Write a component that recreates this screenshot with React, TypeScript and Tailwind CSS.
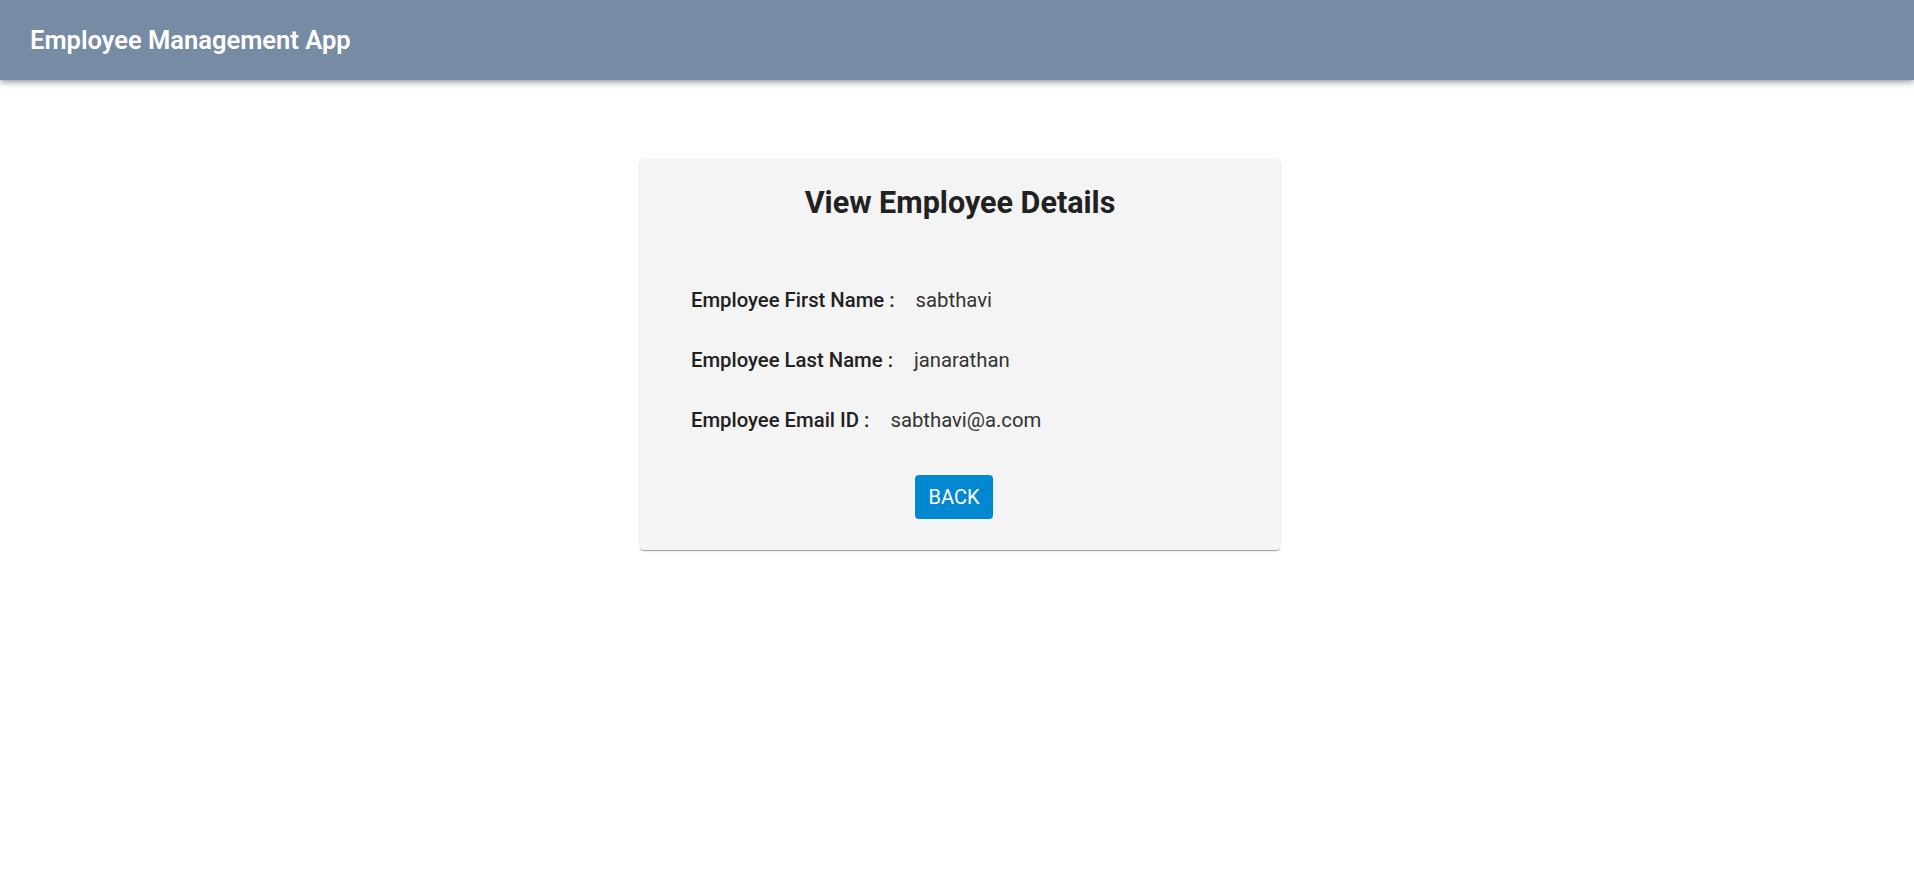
import { useState } from "react";

interface Employee {
  firstName: string;
  lastName: string;
  emailId: string;
}

const employee: Employee = {
  firstName: "sabthavi",
  lastName: "janarathan",
  emailId: "sabthavi@a.com",
};

function Header() {
  return (
    <header className="h-[80px] bg-[#778ba5] flex items-center px-[30px] shadow-[0_2px_4px_-1px_rgba(0,0,0,0.2),0_4px_5px_0_rgba(0,0,0,0.14),0_1px_10px_0_rgba(0,0,0,0.12)]">
      <h1 className="text-white text-[25.5px] font-semibold">Employee Management App</h1>
    </header>
  );
}

function DetailRow({ label, value }: { label: string; value: string }) {
  return (
    <div className="flex items-center h-[60px]">
      <span className="text-[20.3px] font-medium text-[#212121]">{label} :</span>
      <span className="ml-[21px] text-[20.3px] text-[#333]">{value}</span>
    </div>
  );
}

export default function App() {
  const [emp] = useState<Employee>(employee);

  return (
    <div className="min-h-[886px] bg-white font-['Roboto','Liberation_Sans',sans-serif]">
      <Header />
      <main className="flex justify-center pt-[79px]">
        <div className="w-[640px] ml-[6px] bg-[#f4f4f4] rounded-[4px] pt-[26px] pb-[31px] shadow-[0_2px_1px_-1px_rgba(0,0,0,0.2),0_1px_1px_0_rgba(0,0,0,0.14),0_1px_3px_0_rgba(0,0,0,0.12)]">
          <h2 className="text-center text-[30.5px] font-bold text-[#212121] leading-[36px]">View Employee Details</h2>
          <div className="pl-[51px] mt-[49px]">
            <DetailRow label="Employee First Name" value={emp.firstName} />
            <DetailRow label="Employee Last Name" value={emp.lastName} />
            <DetailRow label="Employee Email ID" value={emp.emailId} />
          </div>
          <div className="flex justify-center mt-[25px] pr-[12px]">
            <button className="h-[44px] px-[14px] bg-[#0288d1] text-white text-[20px] rounded-[4px]">
              BACK
            </button>
          </div>
        </div>
      </main>
    </div>
  );
}
